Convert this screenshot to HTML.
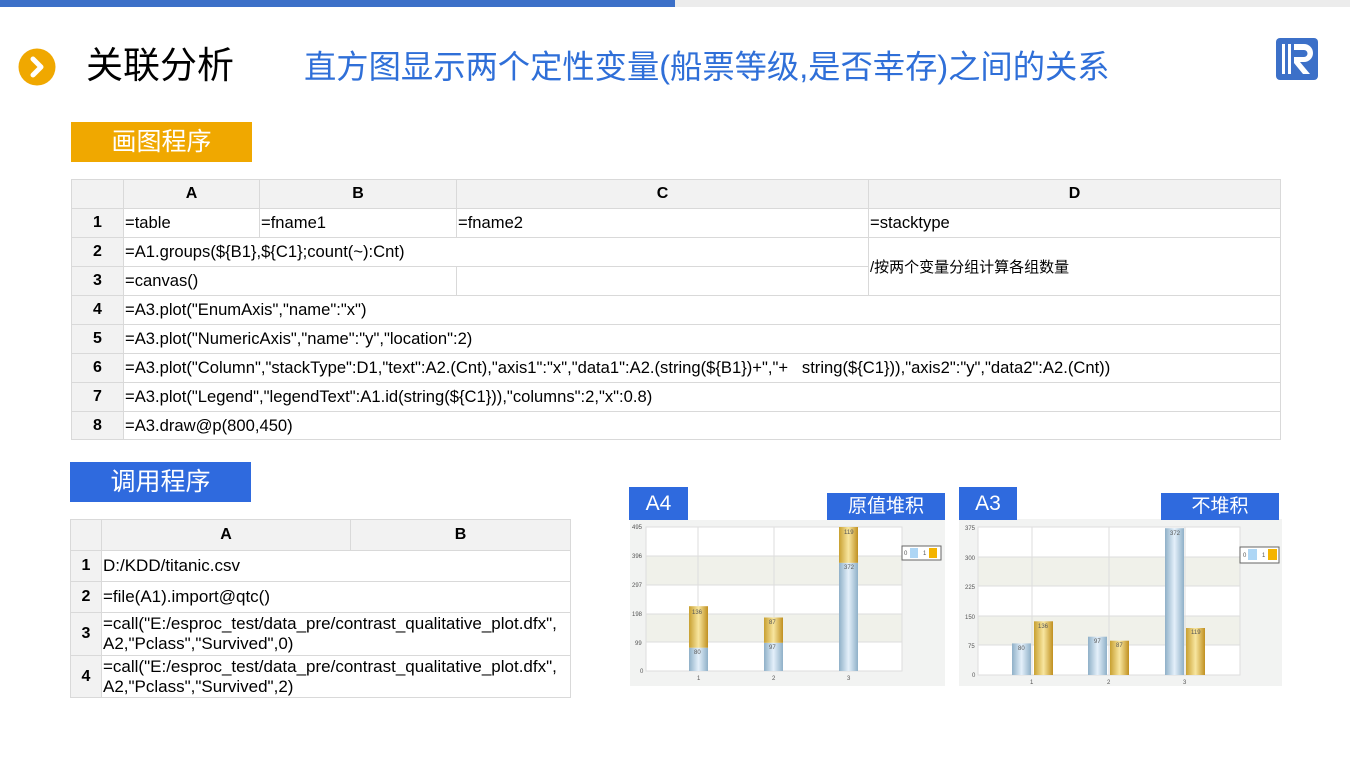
<!DOCTYPE html>
<html><head><meta charset="utf-8"><style>
*{margin:0;padding:0;box-sizing:border-box}
body{width:1350px;height:759px;position:relative;background:#fff;overflow:hidden;font-family:"Liberation Sans","Noto Sans CJK SC",sans-serif}
.a{position:absolute}
table{border-collapse:collapse;position:absolute;table-layout:fixed}
td{border:1px solid #d9d9d9;font-size:16.6px;color:#000;padding:0 1px;white-space:nowrap;overflow:visible}
.h td{background:#f2f2f2;text-align:center;font-weight:bold;font-size:16px}
td.n{background:#f2f2f2;text-align:center;font-weight:bold;font-size:16px}
</style></head><body>
<div class="a" style="left:0;top:0;width:675px;height:7px;background:#3c70c8"></div>
<div class="a" style="left:675px;top:0;width:675px;height:7px;background:#ececec"></div>
<svg class="a" style="left:18px;top:48px" width="38" height="38" viewBox="0 0 38 38"><circle cx="19" cy="19" r="18.5" fill="#f0a800"/><path d="M15 11 L23 19 L15 27" stroke="#fff" stroke-width="5" fill="none" stroke-linecap="round" stroke-linejoin="round"/></svg>
<div class="a" style="left:86px;top:42px;font-size:37px;color:#000;line-height:48px">关联分析</div>
<div class="a" style="left:304px;top:46px;font-size:32.3px;color:#2f6fd8;line-height:42px;white-space:nowrap">直方图显示两个定性变量(船票等级,是否幸存)之间的关系</div>
<svg class="a" style="left:1276px;top:38px" width="42" height="42" viewBox="0 0 42 42"><rect width="42" height="42" rx="4" fill="#3c70c8"/><rect x="6" y="6" width="3" height="30" fill="#fff"/><rect x="12" y="6" width="3" height="30" fill="#fff"/><path d="M18 6 H28 A9 9 0 0 1 28 24 H24 L34 36 H27 L18 25 V19 H28 A3.5 3.5 0 0 0 28 12 H18 Z" fill="#fff"/></svg>
<div class="a" style="left:71px;top:122px;width:181px;height:40px;background:#f0a800;color:#fff;font-size:25px;text-align:center;line-height:40px">画图程序</div>
<table style="left:71px;top:179px;width:1209px">
<colgroup><col style="width:52px"><col style="width:136px"><col style="width:197px"><col style="width:412px"><col style="width:412px"></colgroup>
<tr class="h" style="height:29px"><td></td><td>A</td><td>B</td><td>C</td><td>D</td></tr>
<tr style="height:29px"><td class="n">1</td><td>=table</td><td>=fname1</td><td>=fname2</td><td>=stacktype</td></tr>
<tr style="height:29px"><td class="n">2</td><td colspan="3">=A1.groups(${B1},${C1};count(~):Cnt)</td><td rowspan="2" style="font-size:15px">/按两个变量分组计算各组数量</td></tr>
<tr style="height:29px"><td class="n">3</td><td colspan="2">=canvas()</td><td></td></tr>
<tr style="height:29px"><td class="n">4</td><td colspan="4">=A3.plot("EnumAxis","name":"x")</td></tr>
<tr style="height:29px"><td class="n">5</td><td colspan="4">=A3.plot("NumericAxis","name":"y","location":2)</td></tr>
<tr style="height:29px"><td class="n">6</td><td colspan="4">=A3.plot("Column","stackType":D1,"text":A2.(Cnt),"axis1":"x","data1":A2.(string(${B1})+","+&nbsp;&nbsp; string(${C1})),"axis2":"y","data2":A2.(Cnt))</td></tr>
<tr style="height:29px"><td class="n">7</td><td colspan="4">=A3.plot("Legend","legendText":A1.id(string(${C1})),"columns":2,"x":0.8)</td></tr>
<tr style="height:28px"><td class="n">8</td><td colspan="4">=A3.draw@p(800,450)</td></tr>
</table>
<div class="a" style="left:70px;top:462px;width:181px;height:40px;background:#2f6ade;color:#fff;font-size:25px;text-align:center;line-height:40px">调用程序</div>
<table style="left:70px;top:519px;width:500px">
<colgroup><col style="width:31px"><col style="width:249px"><col style="width:220px"></colgroup>
<tr class="h" style="height:31px"><td></td><td>A</td><td>B</td></tr>
<tr style="height:31px"><td class="n">1</td><td colspan="2" style="font-size:17px">D:/KDD/titanic.csv</td></tr>
<tr style="height:31px"><td class="n">2</td><td colspan="2" style="font-size:17px">=file(A1).import@qtc()</td></tr>
<tr style="height:43px"><td class="n">3</td><td colspan="2" style="white-space:nowrap;line-height:20px;font-size:17px">=call("E:/esproc_test/data_pre/contrast_qualitative_plot.dfx",<br>A2,"Pclass","Survived",0)</td></tr>
<tr style="height:42px"><td class="n">4</td><td colspan="2" style="white-space:nowrap;line-height:20px;font-size:17px">=call("E:/esproc_test/data_pre/contrast_qualitative_plot.dfx",<br>A2,"Pclass","Survived",2)</td></tr>
</table>
<svg class="a" style="left:0;top:0" width="1350" height="759">
<defs>
<linearGradient id="bl" x1="0" x2="1"><stop offset="0" stop-color="#8fb0c8"/><stop offset=".5" stop-color="#e4f0fa"/><stop offset="1" stop-color="#8fb0c8"/></linearGradient>
<linearGradient id="go" x1="0" x2="1"><stop offset="0" stop-color="#c8a030"/><stop offset=".5" stop-color="#f8e6a0"/><stop offset="1" stop-color="#c09020"/></linearGradient>
</defs>
<g font-family="Liberation Sans" font-size="6" fill="#555">
<rect x="630" y="520" width="315" height="166" fill="#f2f3f2"/>
<rect x="646" y="527" width="256" height="144" fill="#fff"/>
<rect x="646" y="556" width="256" height="28.8" fill="#f0f1ea"/>
<rect x="646" y="613.6" width="256" height="28.8" fill="#f0f1ea"/>
<g stroke="#ddd" stroke-width="1"><line x1="646" x2="902" y1="556" y2="556"/><line x1="646" x2="902" y1="585" y2="585"/><line x1="646" x2="902" y1="614" y2="614"/><line x1="646" x2="902" y1="642" y2="642"/><line x1="698" x2="698" y1="527" y2="671"/><line x1="774" x2="774" y1="527" y2="671"/><line x1="849" x2="849" y1="527" y2="671"/><rect x="646" y="527" width="256" height="144" fill="none"/></g>
<text x="632" y="529">495</text><text x="632" y="558">396</text><text x="632" y="587">297</text><text x="632" y="616">198</text><text x="635" y="645">99</text><text x="640" y="673">0</text>
<text x="697" y="680">1</text><text x="772" y="680">2</text><text x="847" y="680">3</text>
<rect x="689" y="647.7" width="19" height="23.3" fill="url(#bl)"/><rect x="689" y="606.2" width="19" height="41.5" fill="url(#go)"/>
<rect x="764" y="642.8" width="19" height="28.2" fill="url(#bl)"/><rect x="764" y="617.5" width="19" height="25.3" fill="url(#go)"/>
<rect x="839" y="562.8" width="19" height="108.2" fill="url(#bl)"/><rect x="839" y="527" width="19" height="35.8" fill="url(#go)"/>
<text x="694" y="654">80</text><text x="692" y="614">136</text><text x="769" y="649">97</text><text x="769" y="624">87</text><text x="844" y="569">372</text><text x="844" y="534">119</text>
<rect x="902" y="546" width="39" height="14" fill="#fff" stroke="#666"/><text x="904" y="555">0</text><rect x="910" y="548" width="8" height="10" fill="#aed6f5"/><text x="923" y="555">1</text><rect x="929" y="548" width="8" height="10" fill="#f4b400"/>
<rect x="959" y="519" width="323" height="167" fill="#f2f3f2"/>
<rect x="978" y="527" width="262" height="148" fill="#fff"/>
<rect x="978" y="556.6" width="262" height="29.6" fill="#f0f1ea"/>
<rect x="978" y="615.8" width="262" height="29.6" fill="#f0f1ea"/>
<g stroke="#ddd" stroke-width="1"><line x1="978" x2="1240" y1="557" y2="557"/><line x1="978" x2="1240" y1="586" y2="586"/><line x1="978" x2="1240" y1="616" y2="616"/><line x1="978" x2="1240" y1="645" y2="645"/><line x1="1032" x2="1032" y1="527" y2="675"/><line x1="1109" x2="1109" y1="527" y2="675"/><line x1="1185" x2="1185" y1="527" y2="675"/><rect x="978" y="527" width="262" height="148" fill="none"/></g>
<text x="965" y="530">375</text><text x="965" y="560">300</text><text x="965" y="589">225</text><text x="965" y="619">150</text><text x="968" y="648">75</text><text x="972" y="677">0</text>
<text x="1030" y="684">1</text><text x="1107" y="684">2</text><text x="1183" y="684">3</text>
<rect x="1012" y="643.4" width="19" height="31.6" fill="url(#bl)"/><rect x="1034" y="621.3" width="19" height="53.7" fill="url(#go)"/>
<rect x="1088" y="636.7" width="19" height="38.3" fill="url(#bl)"/><rect x="1110" y="640.7" width="19" height="34.3" fill="url(#go)"/>
<rect x="1165" y="528.2" width="19" height="146.8" fill="url(#bl)"/><rect x="1186" y="628" width="19" height="47" fill="url(#go)"/>
<text x="1018" y="650">80</text><text x="1038" y="628">136</text><text x="1094" y="643">97</text><text x="1116" y="647">87</text><text x="1170" y="535">372</text><text x="1191" y="634">119</text>
<rect x="1240" y="547" width="39" height="16" fill="#fff" stroke="#666"/><text x="1243" y="557">0</text><rect x="1248" y="549" width="9" height="11" fill="#aed6f5"/><text x="1262" y="557">1</text><rect x="1268" y="549" width="9" height="11" fill="#f4b400"/>
</g>
</svg>
<div class="a" style="left:629px;top:487px;width:59px;height:33px;background:#2f6ade;color:#fff;font-size:21px;text-align:center;line-height:33px">A4</div>
<div class="a" style="left:827px;top:493px;width:118px;height:27px;background:#2f6ade;color:#fff;font-size:19px;text-align:center;line-height:27px">原值堆积</div>
<div class="a" style="left:959px;top:487px;width:58px;height:33px;background:#2f6ade;color:#fff;font-size:21px;text-align:center;line-height:33px">A3</div>
<div class="a" style="left:1161px;top:493px;width:118px;height:27px;background:#2f6ade;color:#fff;font-size:19px;text-align:center;line-height:27px">不堆积</div>
</body></html>
